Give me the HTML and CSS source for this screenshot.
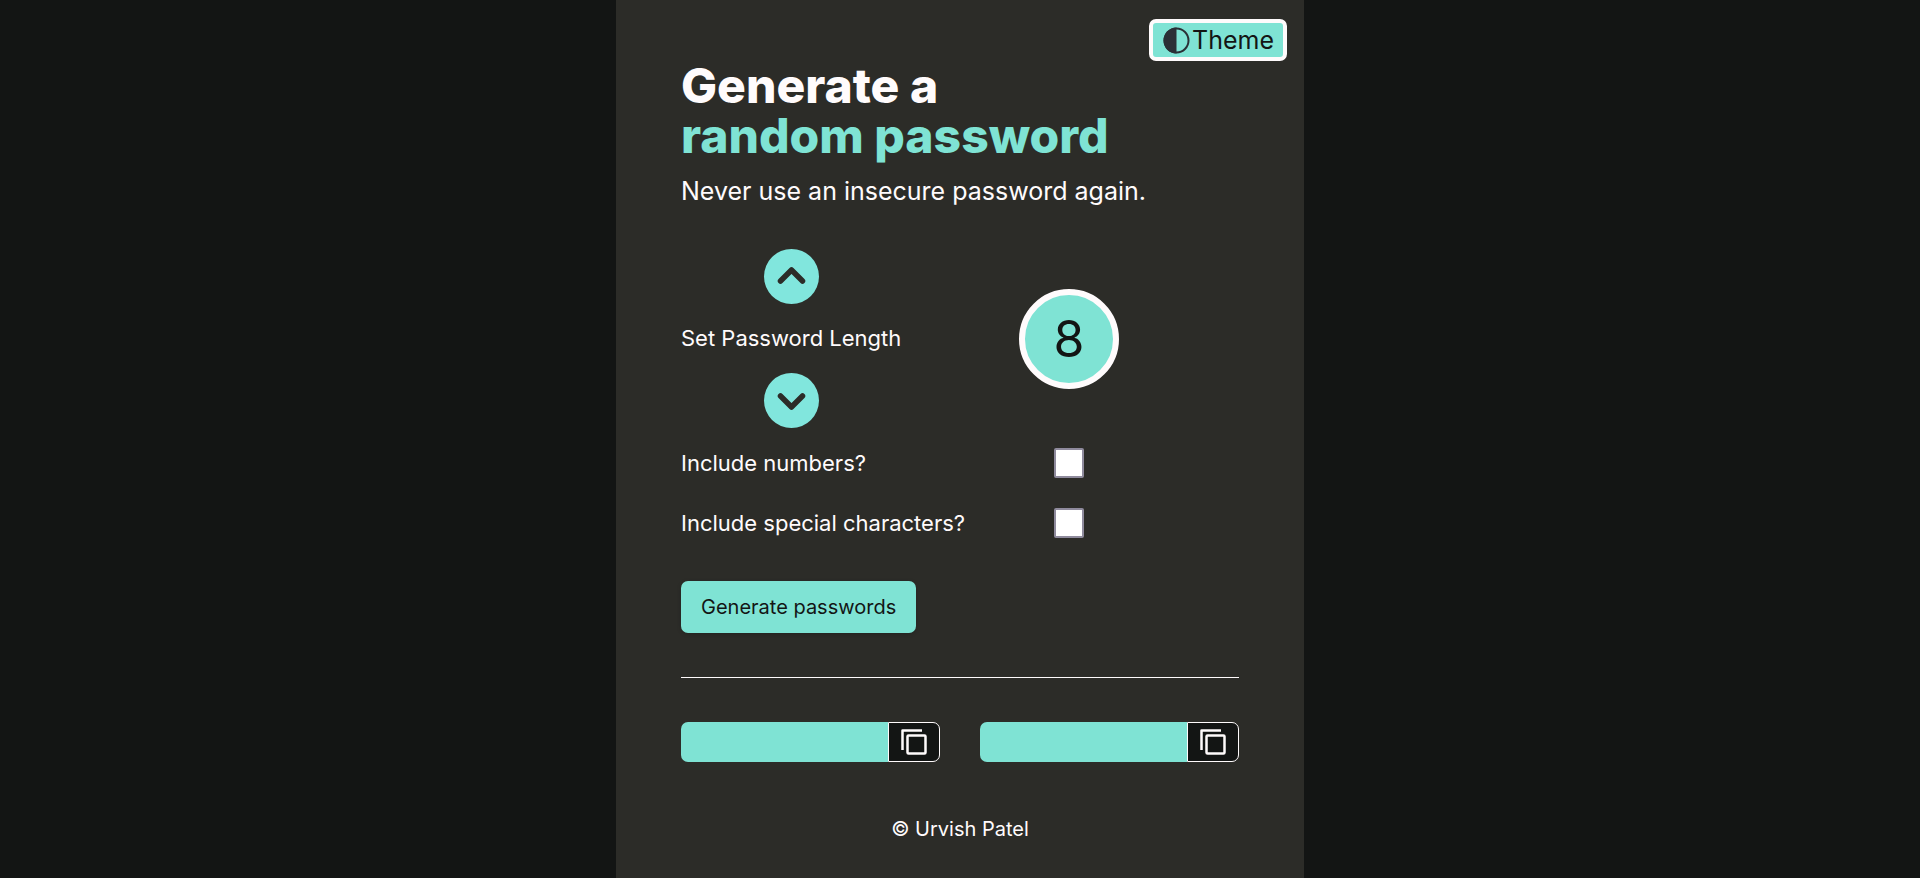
FILE: index.html
```html
<!DOCTYPE html>
<html lang="en">
<head>
<meta charset="utf-8">
<meta name="viewport" content="width=device-width, initial-scale=1">
<title>Password Generator</title>
<link rel="stylesheet" href="styles.css">
</head>
<body>
<main class="panel">
  <button class="theme-btn" type="button">
    <svg class="theme-icon" viewBox="0 0 27 27" aria-hidden="true"><circle cx="13.5" cy="13.5" r="12" fill="none" stroke="#2b3036" stroke-width="2"/><path d="M13.5 0.5a13 13 0 0 0 0 26z" fill="#2b3036"/></svg>
    Theme
  </button>
  <h1 class="title">Generate a<br><span class="accent">random password</span></h1>
  <p class="subtitle">Never use an insecure password again.</p>

  <section class="options">
    <div class="stepper">
      <button class="step-btn" type="button" aria-label="Increase length">
        <svg viewBox="0 0 55 55" aria-hidden="true"><path d="M16.500 32L27.500 21L38.500 32" /></svg>
      </button>
      <span class="label" id="length-label">Set Password Length</span>
      <button class="step-btn" type="button" aria-label="Decrease length">
        <svg viewBox="0 0 55 55" aria-hidden="true"><path d="M16.500 23L27.500 34L38.500 23" /></svg>
      </button>
    </div>
    <output class="length" aria-labelledby="length-label">8</output>
    <label class="label" for="numbers">Include numbers?</label>
    <input class="check" type="checkbox" id="numbers">
    <label class="label" for="special">Include special characters?</label>
    <input class="check" type="checkbox" id="special">
  </section>

  <button class="generate" type="button">Generate passwords</button>
  <hr class="rule">

  <section class="results">
    <div class="result">
      <input class="password" type="text" readonly aria-label="First password">
      <button class="copy" type="button" aria-label="Copy first password">
        <svg class="copy-icon" viewBox="0 0 26 26" aria-hidden="true"><rect x="6.500" y="6.500" width="18" height="18" rx="1"/><path d="M1.500 21V1.500H21"/></svg>
      </button>
    </div>
    <div class="result">
      <input class="password" type="text" readonly aria-label="Second password">
      <button class="copy" type="button" aria-label="Copy second password">
        <svg class="copy-icon" viewBox="0 0 26 26" aria-hidden="true"><rect x="6.500" y="6.500" width="18" height="18" rx="1"/><path d="M1.500 21V1.500H21"/></svg>
      </button>
    </div>
  </section>
  <footer class="footer">© Urvish Patel</footer>
</main>
</body>
</html>
```
FILE: styles.css
```css
* { box-sizing: border-box; }
body {
  margin: 0;
  min-height: 100vh;
  background: #131514;
  color: #fffbfc;
  font-family: Inter, sans-serif;
}
button, input { font-family: inherit; margin: 0; }
button { cursor: pointer; }
.panel {
  position: relative;
  display: flex;
  flex-direction: column;
  max-width: 688px;
  min-height: 100vh;
  margin: 0 auto;
  padding: 61px 65px 0;
  background: #2c2c28;
}
.theme-btn {
  position: absolute;
  top: 19px;
  right: 17px;
  display: flex;
  align-items: center;
  gap: 2px;
  height: 42px;
  padding: 0 9px 0 10px;
  border: 4px solid #fffbfc;
  border-radius: 7px;
  background: #7fe3d4;
  color: #131514;
  font-size: 25px;
}
.theme-icon { width: 27px; height: 27px; }
.title {
  margin: 0;
  font-size: 48px;
  line-height: 50px;
  font-weight: 800;
}
.accent { color: #7fe3d4; }
.subtitle {
  margin: 15px 0 0;
  font-size: 25px;
  line-height: 30px;
}
.options {
  display: grid;
  grid-template-columns: 290px 196px;
  grid-template-rows: auto 70px 50px;
  align-items: center;
  margin-top: 43px;
}
.stepper {
  display: flex;
  flex-direction: column;
  align-items: center;
  justify-self: start;
  gap: 20px;
}
.label {
  font-size: 22px;
  line-height: 29px;
}
.step-btn {
  width: 55px;
  height: 55px;
  padding: 0;
  border: 0;
  border-radius: 50%;
  background: #81e6dd;
}
.step-btn svg {
  display: block;
  fill: none;
  stroke: #2c2c28;
  stroke-width: 5.500;
  stroke-linecap: round;
  stroke-linejoin: round;
}
.length {
  display: grid;
  place-items: center;
  justify-self: center;
  width: 100px;
  height: 100px;
  border: 6px solid #fffbfc;
  border-radius: 50%;
  background: #7fe3d4;
  color: #131514;
  font-size: 50px;
}
.check {
  appearance: none;
  justify-self: center;
  width: 30px;
  height: 30px;
  border: 2px solid #8f8b9d;
  border-radius: 2px;
  background: #fff;
}
.generate {
  align-self: flex-start;
  height: 52px;
  margin-top: 33px;
  padding: 0 20px;
  border: 0;
  border-radius: 7px;
  background: #7fe3d4;
  color: #131514;
  font-size: 20px;
  box-shadow: 0 1px 4px rgba(0, 0, 0, 0.2);
}
.rule {
  flex: none;
  width: 100%;
  height: 1px;
  margin: 44px 0;
  border: 0;
  background: #fffbfc;
}
.results {
  display: grid;
  grid-template-columns: repeat(2, minmax(0, 1fr));
  gap: 40px;
}
.result { display: flex; height: 40px; }
.password {
  flex: 1;
  min-width: 0;
  border: 0;
  border-radius: 7px 0 0 7px;
  background: #7fe3d4;
  color: #131514;
  font-size: 20px;
}
.copy {
  display: grid;
  place-items: center;
  width: 52px;
  padding: 0;
  border: 1px solid #fffbfc;
  border-radius: 0 7px 7px 0;
  background: #131514;
}
.copy-icon {
  width: 26px;
  height: 26px;
  fill: none;
  stroke: #fffbfc;
  stroke-width: 2.500;
  stroke-linejoin: round;
}
.footer {
  margin-top: 54px;
  padding-bottom: 36px;
  text-align: center;
  font-size: 20px;
  line-height: 26px;
}
```
